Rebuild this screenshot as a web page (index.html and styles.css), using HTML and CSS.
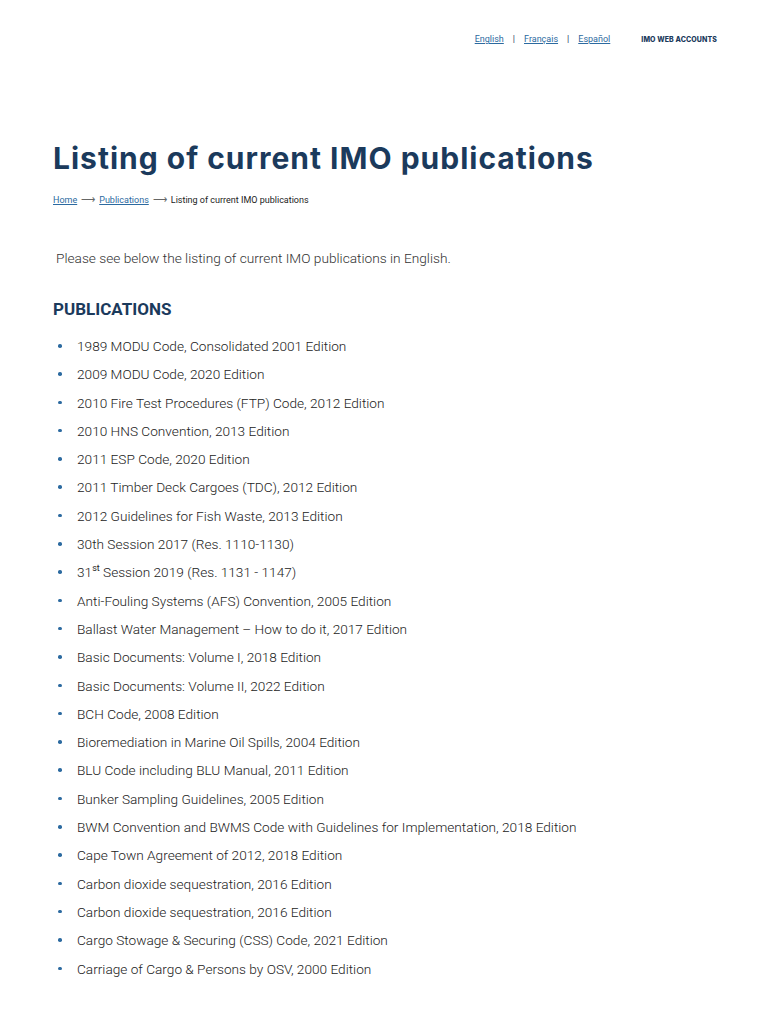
FILE: index.html
```html
<!DOCTYPE html>
<html>
<head>
<meta charset="utf-8">
<link rel="stylesheet" href="styles.css">
</head>
<body>
<header class="topbar">
  <nav class="langs">
    <a href="#">English</a><span class="sep">|</span><a href="#">Français</a><span class="sep">|</span><a href="#">Español</a>
  </nav>
  <a class="accounts" href="#">IMO WEB ACCOUNTS</a>
</header>
<main class="content">
  <h1 class="title">Listing of current IMO publications</h1>
  <div class="crumbs">
    <a href="#">Home</a><span class="arrow">⟶</span><a href="#">Publications</a><span class="arrow">⟶</span><span>Listing of current IMO publications</span>
  </div>
  <p class="intro">Please see below the listing of current IMO publications in English.</p>
  <h2 class="section">PUBLICATIONS</h2>
  <ul class="pubs">
    <li>1989 MODU Code, Consolidated 2001 Edition</li>
    <li>2009 MODU Code, 2020 Edition</li>
    <li>2010 Fire Test Procedures (FTP) Code, 2012 Edition</li>
    <li>2010 HNS Convention, 2013 Edition</li>
    <li>2011 ESP Code, 2020 Edition</li>
    <li>2011 Timber Deck Cargoes (TDC), 2012 Edition</li>
    <li>2012 Guidelines for Fish Waste, 2013 Edition</li>
    <li>30th Session 2017 (Res. 1110-1130)</li>
    <li>31<sup>st</sup> Session 2019 (Res. 1131 - 1147)</li>
    <li>Anti-Fouling Systems (AFS) Convention, 2005 Edition</li>
    <li>Ballast Water Management – How to do it, 2017 Edition</li>
    <li>Basic Documents: Volume I, 2018 Edition</li>
    <li>Basic Documents: Volume II, 2022 Edition</li>
    <li>BCH Code, 2008 Edition</li>
    <li>Bioremediation in Marine Oil Spills, 2004 Edition</li>
    <li>BLU Code including BLU Manual, 2011 Edition</li>
    <li>Bunker Sampling Guidelines, 2005 Edition</li>
    <li>BWM Convention and BWMS Code with Guidelines for Implementation, 2018 Edition</li>
    <li>Cape Town Agreement of 2012, 2018 Edition</li>
    <li>Carbon dioxide sequestration, 2016 Edition</li>
    <li>Carbon dioxide sequestration, 2016 Edition</li>
    <li>Cargo Stowage &amp; Securing (CSS) Code, 2021 Edition</li>
    <li>Carriage of Cargo &amp; Persons by OSV, 2000 Edition</li>
  </ul>
</main>
</body>
</html>
```
FILE: styles.css
```css
html, body { margin: 0; padding: 0; background: #fff; }
body { font-family: Roboto, "Liberation Sans", sans-serif; color: #333; }

.topbar {
  display: flex;
  justify-content: flex-end;
  align-items: center;
  padding: 33px 51px 0 0;
  height: 12px;
}
.langs { display: flex; align-items: center; font-size: 9px; }
.langs a { color: #2c6aa0; text-decoration: underline; }
.langs .sep { color: #1b3a5c; margin: 0 9px; font-size: 9px; }
.accounts {
  margin-left: 31px;
  font-family: Inter, "Liberation Sans", sans-serif;
  font-weight: 800;
  font-size: 7px;
  color: #1b3a5c;
  text-decoration: none;
  letter-spacing: 0.1px;
}

.content { padding: 0 53px; }
.title {
  margin: 93px 0 0 0;
  font-family: Inter, "Open Sans", sans-serif;
  font-weight: 700;
  font-size: 30px;
  line-height: 40px;
  color: #1b3a5c;
  letter-spacing: 1px;
}
.crumbs { margin-top: 16px; font-size: 9px; color: #222; display: flex; align-items: center; }
.crumbs a { color: #2c6aa0; text-decoration: underline; }
.crumbs .arrow { margin: 0 4px; color: #666; font-size: 10px; font-weight: 300; }

.intro { margin: 43px 0 0 3px; font-size: 13.7px; color: #333; line-height: 20px; font-weight: 300; }
.section {
  margin: 29px 0 0 0;
  font-size: 17px;
  font-weight: 700;
  color: #1b3a5c;
  line-height: 24px;
}
.pubs { list-style: none; margin: 11px 0 0 0; padding: 0; }
.pubs li {
  position: relative;
  padding-left: 24px;
  font-size: 13.65px;
  font-weight: 300;
  line-height: 28.3px;
  color: #222;
}
.pubs li::before {
  content: "";
  position: absolute;
  left: 5px;
  top: 12px;
  width: 3.5px;
  height: 3.5px;
  border-radius: 50%;
  background: #2c6aa0;
}
.pubs sup { font-size: 9px; line-height: 0; font-weight: 400; }
```
